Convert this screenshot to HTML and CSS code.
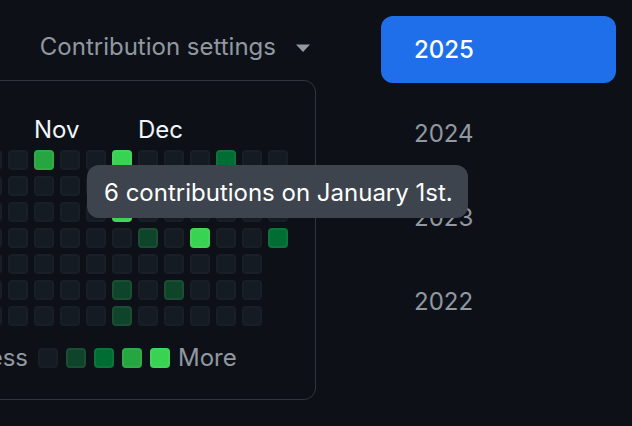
FILE: index.html
```html
<!DOCTYPE html>
<html lang="en">
<head>
<meta charset="utf-8">
<title>Contributions</title>
<link rel="stylesheet" href="styles.css">
</head>
<body>
<div class="page">
  <div class="main">
    <div class="settings">
      <span class="settings-label">Contribution settings</span>
      <svg class="caret" width="16" height="10" viewBox="0 0 16 10"><path d="M1 1.5h14L8 9z" fill="#9198a1"/></svg>
    </div>
    <div class="graph">
      <div class="months">
        <span class="month m-nov">Nov</span>
        <span class="month m-dec">Dec</span>
      </div>
      <div class="grid" id="grid"></div>
      <div class="legend">
        <span class="legend-text less">Less</span>
        <span class="cell l0"></span>
        <span class="cell l1"></span>
        <span class="cell l2"></span>
        <span class="cell l3"></span>
        <span class="cell l4"></span>
        <span class="legend-text">More</span>
      </div>
    </div>
  </div>
  <ul class="years">
    <li class="year active">2025</li>
    <li class="year">2024</li>
    <li class="year">2023</li>
    <li class="year">2022</li>
  </ul>
</div>
<div class="tooltip">6 contributions on January 1st.</div>
<script>
(function () {
  var grid = document.getElementById('grid');
  var levels = {
    '6-0': 3, '9-0': 4, '13-0': 2,
    '9-1': 4, '9-2': 4,
    '10-3': 1, '12-3': 4, '15-3': 2,
    '9-5': 1, '11-5': 1,
    '9-6': 1
  };
  var html = '';
  for (var c = 0; c < 14; c++) {
    var rows = c === 13 ? 4 : 7;
    for (var r = 0; r < rows; r++) {
      var key = (c + 2) + '-' + r;
      var lv = levels[key] || 0;
      html += '<span class="cell l' + lv + '"></span>';
    }
  }
  grid.innerHTML = html;
})();
</script>
</body>
</html>
```

FILE: styles.css
```css
* { box-sizing: border-box; }
html, body {
  margin: 0;
  padding: 0;
  background: #0d1117;
  overflow: hidden;
  width: 632px;
  height: 426px;
}
body {
  font-family: Inter, "Noto Sans", "Liberation Sans", sans-serif;
  color: #f0f6fc;
  position: relative;
}
.page {
  display: flex;
  align-items: flex-start;
}
.main {
  width: 316px;
  flex: none;
}
.settings {
  display: flex;
  justify-content: flex-end;
  align-items: center;
  gap: 19px;
  padding: 35px 5px 21px 0;
  height: 80px;
  color: #9198a1;
  font-size: 24px;
  line-height: 24px;
}
.caret { display: block; margin-top: 1px; }
.graph {
  margin-left: -84px;
  width: 400px;
  height: 320px;
  border: 1px solid #30363d;
  border-radius: 12px;
  padding: 37px 27px 0 13px;
}
.months {
  display: grid;
  grid-template-columns: repeat(14, 20px);
  column-gap: 6px;
  height: 24px;
  margin-bottom: 8px;
  font-size: 24px;
  line-height: 24px;
  color: #f0f6fc;
}
.month { white-space: nowrap; }
.m-nov { grid-column: 5; grid-row: 1; }
.m-dec { grid-column: 9; grid-row: 1; }
.grid {
  display: grid;
  grid-auto-flow: column;
  grid-template-rows: repeat(7, 20px);
  grid-auto-columns: 20px;
  gap: 6px;
}
.cell {
  display: block;
  width: 20px;
  height: 20px;
  border-radius: 4px;
  outline: 2px solid rgba(255, 255, 255, 0.05);
  outline-offset: -2px;
}
.l0 { background: #151b23; outline-color: rgba(255,255,255,0.02); }
.l1 { background: #0e4429; }
.l2 { background: #006d32; }
.l3 { background: #26a641; }
.l4 { background: #39d353; }
.legend {
  display: flex;
  align-items: center;
  gap: 8px;
  margin-top: 22px;
  margin-left: 38px;
  height: 20px;
  font-size: 24px;
  line-height: 24px;
  color: #9198a1;
}
.legend-text.less {
  width: 60px;
  text-align: right;
  margin-right: 2px;
}
.years {
  list-style: none;
  margin: 0 0 0 65px;
  padding: 16px 0 0 0;
  width: 235px;
  display: flex;
  flex-direction: column;
  gap: 17px;
}
.year {
  height: 67px;
  display: flex;
  align-items: center;
  padding-left: 33px;
  font-size: 24px;
  color: #9198a1;
  border-radius: 12px;
}
.year.active {
  background: #1f6feb;
  color: #ffffff;
  font-weight: 500;
}
.tooltip {
  position: absolute;
  left: 87px;
  top: 165px;
  width: 381px;
  height: 53px;
  background: #3d444d;
  border-radius: 12px;
  color: #ffffff;
  font-size: 24px;
  display: flex;
  align-items: center;
  padding-left: 17px;
  padding-top: 2px;
  white-space: nowrap;
}
```
